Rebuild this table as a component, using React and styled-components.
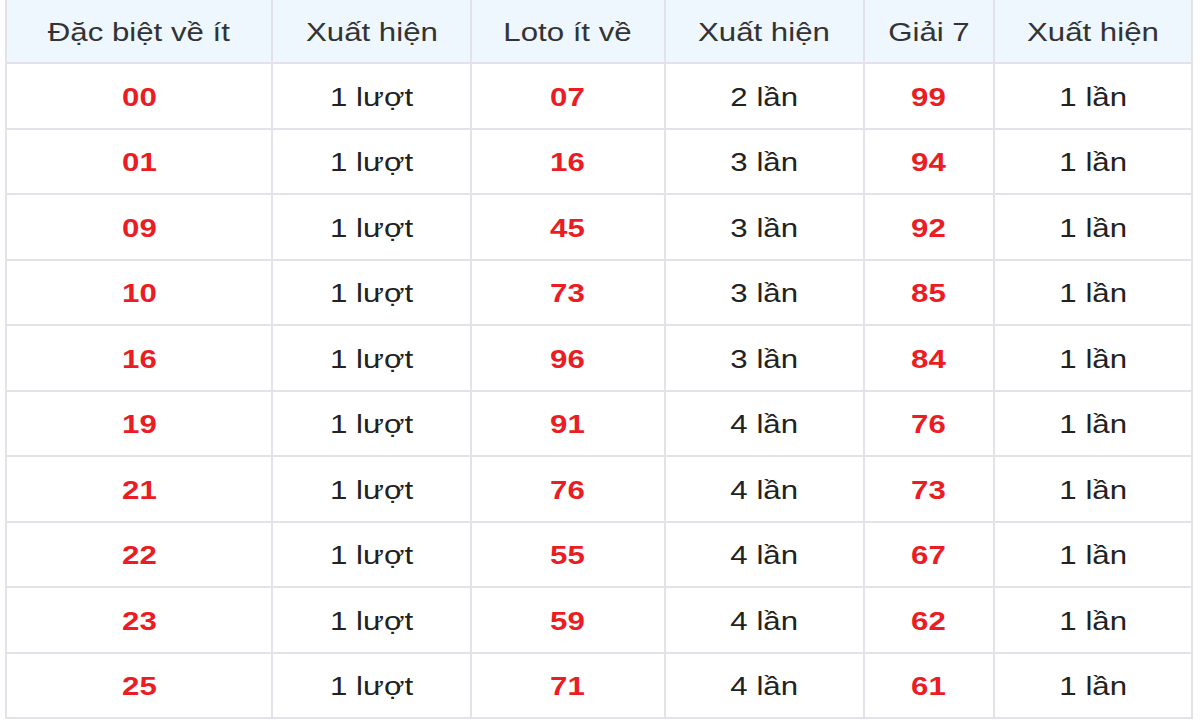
import React from 'react';
import styled, {createGlobalStyle} from 'styled-components';

const GlobalStyle = createGlobalStyle`
    html, body {
        margin: 0;
        padding: 0;
        background: #ffffff;
    }
    body {
        font-family: "Liberation Sans", Arial, sans-serif;
    }
`

const rows = [
    ['00', '1 lượt', '07', '2 lần', '99', '1 lần'],
    ['01', '1 lượt', '16', '3 lần', '94', '1 lần'],
    ['09', '1 lượt', '45', '3 lần', '92', '1 lần'],
    ['10', '1 lượt', '73', '3 lần', '85', '1 lần'],
    ['16', '1 lượt', '96', '3 lần', '84', '1 lần'],
    ['19', '1 lượt', '91', '4 lần', '76', '1 lần'],
    ['21', '1 lượt', '76', '4 lần', '73', '1 lần'],
    ['22', '1 lượt', '55', '4 lần', '67', '1 lần'],
    ['23', '1 lượt', '59', '4 lần', '62', '1 lần'],
    ['25', '1 lượt', '71', '4 lần', '61', '1 lần'],
]

const headers = ['Đặc biệt về ít', 'Xuất hiện', 'Loto ít về', 'Xuất hiện', 'Giải 7', 'Xuất hiện']
const widths = [266, 199, 193, 199, 130, 198]

const Wrap = styled.div`
    padding: 0 0 0 5px;
    width: 1188px;
`

const Table = styled.table`
    width: 1188px;
    border-collapse: collapse;
    table-layout: fixed;
    border: 2px solid #e2e2e8;
    border-top: none;
`

const HeadRow = styled.tr`
    height: 63px;
`

const HeadCell = styled.th`
    padding: 2px 0 0;
    background: #eef6fe;
    border: 2px solid #e2e2e8;
    border-top: none;
    color: #333333;
    font-weight: 400;
    font-size: 26px;
    text-align: center;
    vertical-align: middle;
`

const Row = styled.tr`
    height: 65.5px;
`

const Cell = styled.td`
    padding: 3px 0 0;
    border: 2px solid #e2e2e8;
    text-align: center;
    vertical-align: middle;
    font-size: 26px;
    font-weight: ${p => p.$num ? 700 : 400};
    color: ${p => p.$num ? '#ec1c24' : '#222222'};
`

const Stretch = styled.span`
    display: inline-block;
    transform: scaleX(1.2);
    line-height: 1;
`

export default function App() {
    return (
        <Wrap>
            <GlobalStyle />
            <Table>
                <colgroup>
                    {widths.map((w, i) => <col key={i} style={{width: w}} />)}
                </colgroup>
                <thead>
                    <HeadRow>
                        {headers.map((h, i) => (
                            <HeadCell key={i}><Stretch>{h}</Stretch></HeadCell>
                        ))}
                    </HeadRow>
                </thead>
                <tbody>
                    {rows.map((r, i) => (
                        <Row key={i}>
                            {r.map((c, j) => (
                                <Cell key={j} $num={j % 2 === 0}>
                                    <Stretch>{c}</Stretch>
                                </Cell>
                            ))}
                        </Row>
                    ))}
                </tbody>
            </Table>
        </Wrap>
    )
}
